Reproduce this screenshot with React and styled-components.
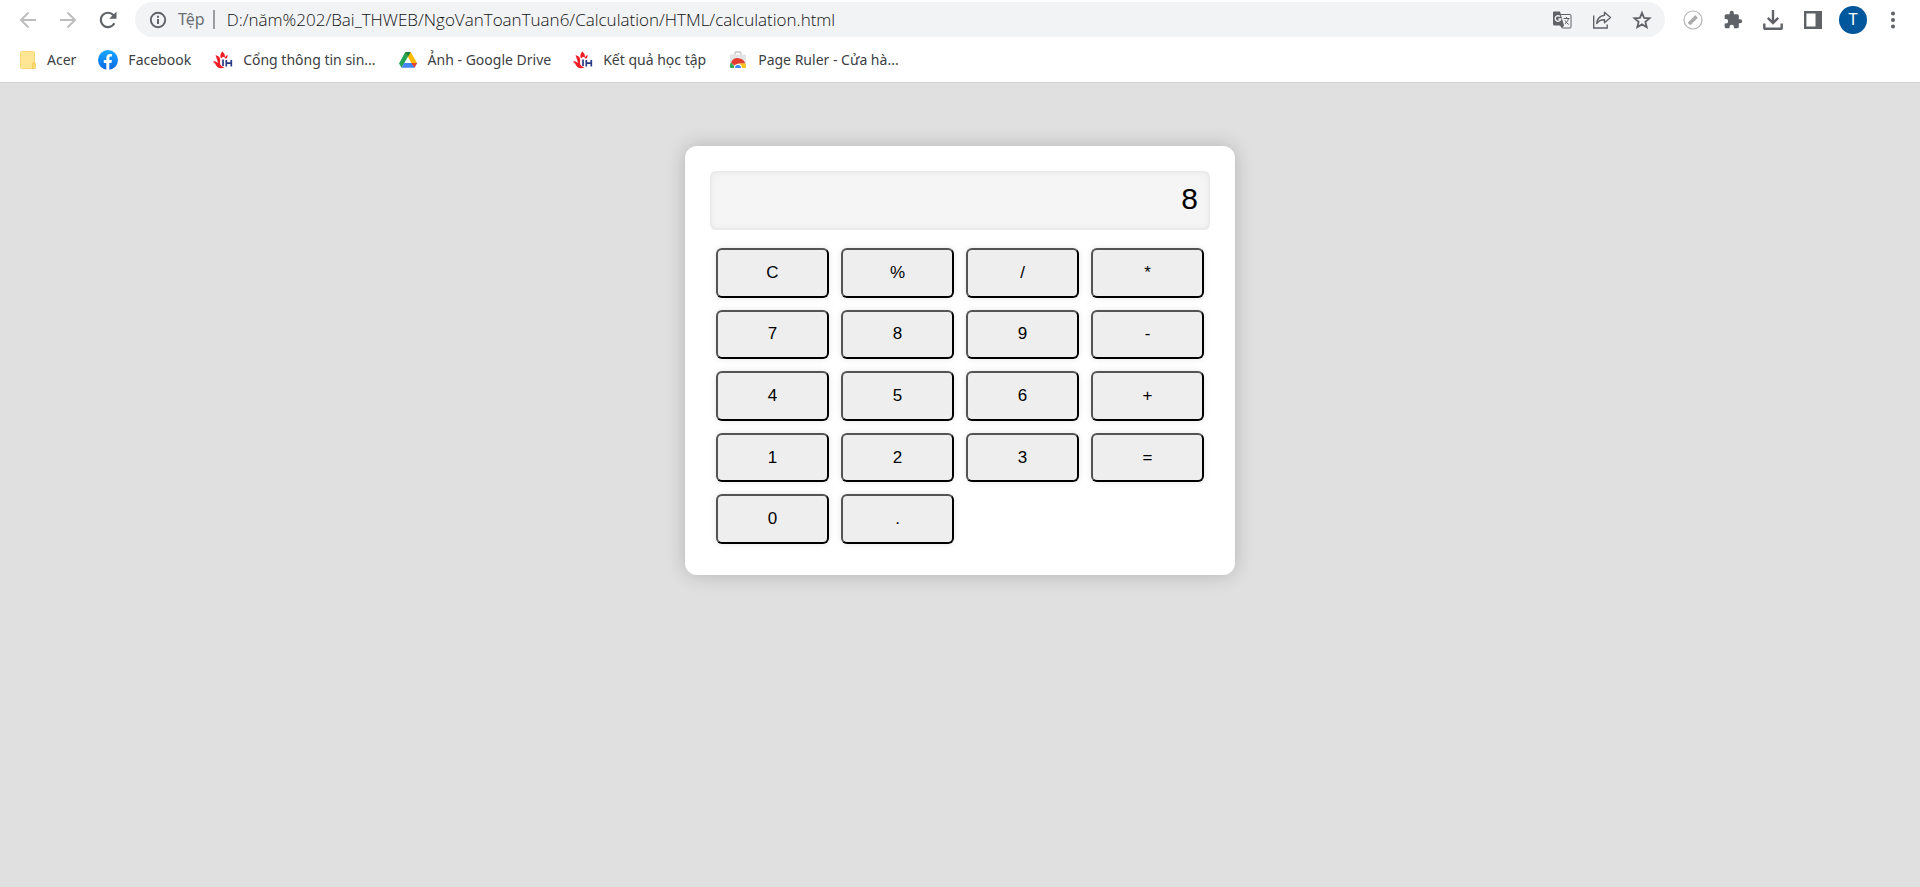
import React, { useState } from 'react';
import styled, { createGlobalStyle } from 'styled-components';

const GlobalStyle = createGlobalStyle`
  *, *::before, *::after { box-sizing: border-box; }
  body {
    margin: 0;
    background: #e0e0e0;
    font-family: "Liberation Sans", Arial, sans-serif;
  }
`;

const Page = styled.div`
  display: flex;
  flex-direction: column;
  min-height: 100vh;
`;

const Browser = styled.header`
  background: #fff;
  border-bottom: 1px solid #d3d3d4;
  padding-top: 2px;
  font-family: "Noto Sans", "Segoe UI", sans-serif;
`;

const Toolbar = styled.div`
  display: flex;
  align-items: center;
  height: 35px;
  padding: 0 7px 0 8px;
`;

const IconButton = styled.button`
  display: flex;
  align-items: center;
  justify-content: center;
  flex: none;
  width: 40px;
  height: 34px;
  padding: 0;
  border: 0;
  background: none;
  color: ${({ $muted }) => ($muted ? '#bcbdbf' : '#5f6368')};

  svg { display: block; }
`;

const Omnibox = styled.form`
  display: flex;
  align-items: center;
  flex: 1;
  min-width: 0;
  height: 35px;
  margin: 0 8px 0 7px;
  padding: 0 3px;
  border-radius: 18px;
  background: #f1f3f4;
`;

const Scheme = styled.label`
  flex: none;
  padding-right: 8px;
  border-right: 2px solid #9b9da0;
  color: #6b6e73;
  font-size: 16px;
  line-height: 19px;
`;

const Address = styled.input`
  flex: 1;
  min-width: 0;
  height: 32px;
  padding: 0 0 0 12px;
  border: 0;
  outline: 0;
  background: none;
  color: #111214;
  font-family: "Open Sans", "Segoe UI", sans-serif;
  font-size: 17px;
  font-weight: 340;
`;

const Avatar = styled.span`
  display: grid;
  place-items: center;
  width: 28px;
  height: 28px;
  border-radius: 50%;
  background: #01579b;
  color: #fff;
  font-family: Roboto, sans-serif;
  font-size: 16px;
`;

const Bookmarks = styled.nav`
  display: flex;
  align-items: center;
  gap: 22px;
  height: 45px;
  padding: 0 17px;
`;

const Bookmark = styled.a`
  display: flex;
  align-items: center;
  flex: none;
  gap: 10px;
  color: #3c4043;
  font-size: 14px;
  line-height: 20px;
  text-decoration: none;
  white-space: nowrap;
`;

const Main = styled.main`
  flex: 1;
  display: flex;
  justify-content: center;
  align-items: flex-start;
  padding: 63px 16px;
`;

const Card = styled.section`
  width: 100%;
  max-width: 550px;
  padding: 25px;
  border-radius: 12px;
  background: #fff;
  box-shadow: 0 0 20px rgba(0, 0, 0, 0.2);
`;

const Display = styled.input`
  display: block;
  width: 100%;
  height: 59px;
  padding: 0 12px 3px;
  border: 0;
  outline: 0;
  border-radius: 6px;
  background: #f5f5f5;
  box-shadow: inset 0 0 6px rgba(0, 0, 0, 0.1);
  color: #000;
  font-family: inherit;
  font-size: 30px;
  text-align: right;
`;

const Keypad = styled.div`
  display: grid;
  grid-template-columns: repeat(4, 1fr);
  grid-auto-rows: 1fr;
  gap: 12px;
  height: 296px;
  margin: 18px 6px 6px;
`;

const Key = styled.button`
  padding: 0;
  border: 2px outset #000;
  border-radius: 6px;
  background: #eee;
  box-shadow: 0 0 6px rgba(0, 0, 0, 0.1);
  color: #000;
  font-family: inherit;
  font-size: 17px;
`;

const BackIcon = () => (
  <svg width="18" height="18" viewBox="0 0 18 18" fill="none" stroke="currentColor" strokeWidth="2">
    <path d="M17 9H2M9.500 1.500L2 9l7.500 7.500" />
  </svg>
);

const ForwardIcon = () => (
  <svg width="18" height="18" viewBox="0 0 18 18" fill="none" stroke="currentColor" strokeWidth="2">
    <path d="M1 9H16M8.500 1.500L16 9l-7.500 7.500" />
  </svg>
);

const ReloadIcon = () => (
  <svg width="18" height="18" viewBox="0 0 18 18" fill="none">
    <path d="M15.400 12.200A7.200 7.200 0 1 1 14.500 4.300" stroke="currentColor" strokeWidth="2.200" />
    <path d="M17.500 .5v7.300h-7.300z" fill="currentColor" />
  </svg>
);

const InfoIcon = () => (
  <svg width="18" height="18" viewBox="0 0 18 18" fill="none" stroke="currentColor">
    <circle cx="9" cy="9" r="7.200" strokeWidth="1.900" />
    <path d="M9 8v5M9 4.800v2" strokeWidth="2" />
  </svg>
);

const TranslateIcon = () => (
  <svg width="20" height="20" viewBox="0 0 20 20">
    <path d="M8.500 4.500H18a1 1 0 0 1 1 1V17a1 1 0 0 1-1 1h-7.500" fill="none" stroke="currentColor" />
    <path d="M2 1.500h6L12 15.500H2.500a1.500 1.500 0 0 1-1.500-1.500V2.500a1 1 0 0 1 1-1zM8 15.500h4L10 18.500z" fill="currentColor" />
    <path d="M8.100 6.600A2.800 2.800 0 1 0 8.800 9H6.300" fill="none" stroke="#f1f3f4" strokeWidth="1.400" />
    <path d="M11.500 8.500h6M14.500 7v1.500M16.500 8.500c-.6 2.500-2 4.200-3.700 5.300M13 10.500c.8 1.600 2.100 3 3.800 4" fill="none" stroke="currentColor" />
  </svg>
);

const ShareIcon = () => (
  <svg width="20" height="20" viewBox="0 0 20 20" fill="none" stroke="currentColor" strokeWidth="1.400">
    <path d="M1.700 5.500V18h13.500v-3.500" />
    <path d="M12.500 2.200l6 5.300-6 5.300V9.700c-3.500 0-6 1-7.800 3.800.3-4.200 2.800-7.600 7.800-8.300z" strokeLinejoin="round" />
  </svg>
);

const StarIcon = () => (
  <svg width="20" height="20" viewBox="0 0 20 20" fill="none" stroke="currentColor" strokeWidth="1.800">
    <path d="M10 2.800l2.100 5 5.500.5-4.200 3.600 1.300 5.300L10 14.400l-4.700 2.800 1.300-5.300L2.400 8.300l5.500-.5z" />
  </svg>
);

const RulerIcon = () => (
  <svg width="20" height="20" viewBox="0 0 20 20" fill="none">
    <circle cx="10" cy="10" r="9" stroke="#b4b4b4" strokeWidth="1.200" />
    <path d="M6 14l7.500-7.500" stroke="#a5a5a5" strokeWidth="3.600" />
    <path d="M7 11.500l1 1M9 9.500l1 1M11 7.500l1 1" stroke="#d8d8d8" strokeWidth=".8" />
  </svg>
);

const PuzzleIcon = () => (
  <svg width="20" height="20" viewBox="0 0 24 24" fill="currentColor">
    <path d="M20.500 11H19V7a2 2 0 0 0-2-2h-4V3.500a2.500 2.500 0 0 0-5 0V5H4a2 2 0 0 0-2 2v3.800h1.500a2.700 2.700 0 0 1 0 5.400H2V20a2 2 0 0 0 2 2h3.800v-1.500a2.700 2.700 0 0 1 5.400 0V22H17a2 2 0 0 0 2-2v-4h1.500a2.500 2.500 0 0 0 0-5z" />
  </svg>
);

const DownloadIcon = () => (
  <svg width="20" height="20" viewBox="0 0 20 20" fill="none" stroke="currentColor" strokeWidth="2.400">
    <path d="M10 0v12.500M4.800 7.800L10 13l5.200-5.200M1.300 13.500V18a.8.8 0 0 0 .8.800h15.800a.8.800 0 0 0 .8-.8v-4.500" />
  </svg>
);

const PanelIcon = () => (
  <svg width="18" height="18" viewBox="0 0 18 18">
    <path d="M1.200 1.200h15.600v15.600H1.200z" fill="none" stroke="currentColor" strokeWidth="2.400" />
    <path d="M11.500 0H18v18h-6.500z" fill="currentColor" />
  </svg>
);

const MenuIcon = () => (
  <svg width="18" height="18" viewBox="0 0 18 18" fill="currentColor">
    <circle cx="9" cy="2.500" r="2" />
    <circle cx="9" cy="9" r="2" />
    <circle cx="9" cy="15.500" r="2" />
  </svg>
);

const FolderIcon = () => (
  <svg width="20" height="20" viewBox="0 0 20 20">
    <path d="M4.500 1.500h12a1 1 0 0 1 1 1v16h-13a1 1 0 0 1-1-1v-15a1 1 0 0 1 1-1z" fill="#ffe694" stroke="#f8d775" />
    <path d="M15.500 14a1.500 1.500 0 0 1 3 0v3.500a1 1 0 0 1-1 1h-2z" fill="#ffdc70" stroke="#f0c95c" strokeWidth=".8" />
  </svg>
);

const FacebookIcon = () => (
  <svg width="20" height="20" viewBox="0 0 20 20">
    <defs>
      <linearGradient id="facebookBlue" x2="0" y2="1">
        <stop stopColor="#1aa9ff" />
        <stop offset="1" stopColor="#0867e3" />
      </linearGradient>
    </defs>
    <circle cx="10" cy="10" r="10" fill="url(#facebookBlue)" />
    <path d="M8.300 19.900V13H5.800v-3h2.500V8c0-2.700 1.500-4.100 3.800-4.100.9 0 1.900.2 1.900.2v2.500h-1.200c-1.100 0-1.500.7-1.500 1.500V10h2.600l-.5 3h-2.100v6.900a10 10 0 0 1-3 0z" fill="#fff" />
  </svg>
);

const UniversityIcon = () => (
  <svg width="20" height="20" viewBox="0 0 20 20">
    <path d="M9.300 1.500c2 1.800 3 3.600 2.600 6L10 6.800 8 8.500C6.600 6.200 7.500 3.500 9.300 1.500zM2.500 5.300c2.700.3 4.300 1.700 4.700 4.200l-.2 4c.5 2.300 2 3.300 4.500 3.800-3 1.700-6.300 1.100-8-1.300-.9-1.400-1.500-2.900-3.500-4.200 1.800-1 3.500-.4 4.700 1.500C4.900 10.500 3.500 8.500 2.500 5.300zM14.500 5c.2 1.300-.2 2.400-1 3.400h-1.700c.2-1.500 1.100-2.700 2.700-3.400z" fill="#ec2027" />
    <path d="M10 9.500v6.500M13.300 10v6.500M18.300 10v6.500M13.300 13.200h5" fill="none" stroke="#2b3a82" strokeWidth="1.700" />
  </svg>
);

const DriveIcon = () => (
  <svg width="20" height="20" viewBox="0 0 20 20">
    <path d="M7.300 2h5.400L6.300 13 3.500 17.800 1 13.500z" fill="#23a455" />
    <path d="M7.300 2h5.400L19 13h-5.600z" fill="#ffba00" />
    <path d="M7.300 2h5.400L10 6.700z" fill="#188038" />
    <path d="M6.300 13H19l-2.500 4.800h-13z" fill="#4285f4" />
    <path d="M13.400 13H19l-2.500 4.800z" fill="#ea4335" />
  </svg>
);

const StoreIcon = () => (
  <svg width="20" height="20" viewBox="0 0 20 20">
    <path d="M7 5V3a1 1 0 0 1 1-1h4a1 1 0 0 1 1 1v2" fill="none" stroke="#c4c6c8" strokeWidth="1.300" />
    <path d="M2 4.500h16V17a1 1 0 0 1-1 1H3a1 1 0 0 1-1-1z" fill="#e3e4e6" />
    <path d="M3 12.500a7.700 7.700 0 0 1 14.300 1H10L7 16z" fill="#e33b2e" />
    <path d="M3 12.300L7.500 18H3a1 1 0 0 1-1-1c0-2 .2-3.200 1-4.700z" fill="#34a853" />
    <path d="M11 13.500h6.300c.5 1.200.7 2.300.7 3.500a1 1 0 0 1-1 1h-5z" fill="#fbc116" />
    <path d="M6 18a4 4 0 0 1 8 0z" fill="#fff" />
    <path d="M7 18a3 3 0 0 1 6 0z" fill="#4285f4" />
  </svg>
);

const bookmarks = [
  { label: 'Acer', Icon: FolderIcon },
  { label: 'Facebook', Icon: FacebookIcon },
  { label: 'Cổng thông tin sin...', Icon: UniversityIcon },
  { label: 'Ảnh - Google Drive', Icon: DriveIcon },
  { label: 'Kết quả học tập', Icon: UniversityIcon },
  { label: 'Page Ruler - Cửa hà...', Icon: StoreIcon },
];

const keys = ['C', '%', '/', '*', '7', '8', '9', '-', '4', '5', '6', '+', '1', '2', '3', '=', '0', '.'];

const calculate = (expression) => {
  const tokens = expression.match(/\d*\.?\d+|[-+*/%]/g) || [];
  const apply = {
    '+': (a, b) => a + b,
    '-': (a, b) => a - b,
    '*': (a, b) => a * b,
    '/': (a, b) => a / b,
    '%': (a, b) => a % b,
  };
  const values = [Number(tokens[0] || 0)];
  const pending = [];
  for (let i = 1; i + 1 < tokens.length; i += 2) {
    const operator = tokens[i];
    const next = Number(tokens[i + 1]);
    if (operator === '+' || operator === '-') {
      values.push(next);
      pending.push(operator);
    } else {
      values.push(apply[operator](values.pop(), next));
    }
  }
  return String(pending.reduce((sum, operator, i) => apply[operator](sum, values[i + 1]), values[0]));
};

export default function App() {
  const [value, setValue] = useState('8');
  const [url, setUrl] = useState('D:/năm%202/Bai_THWEB/NgoVanToanTuan6/Calculation/HTML/calculation.html');

  const press = (key) => {
    if (key === 'C') setValue('');
    else if (key === '=') setValue(calculate(value));
    else setValue(value + key);
  };

  return (
    <Page>
      <GlobalStyle />
      <Browser>
        <Toolbar>
          <IconButton $muted aria-label="Back"><BackIcon /></IconButton>
          <IconButton $muted aria-label="Forward"><ForwardIcon /></IconButton>
          <IconButton aria-label="Reload"><ReloadIcon /></IconButton>
          <Omnibox onSubmit={(event) => event.preventDefault()}>
            <IconButton type="button" aria-label="Site information"><InfoIcon /></IconButton>
            <Scheme htmlFor="address">Tệp</Scheme>
            <Address id="address" value={url} onChange={(event) => setUrl(event.target.value)} />
            <IconButton type="button" aria-label="Translate"><TranslateIcon /></IconButton>
            <IconButton type="button" aria-label="Share"><ShareIcon /></IconButton>
            <IconButton type="button" aria-label="Bookmark"><StarIcon /></IconButton>
          </Omnibox>
          <IconButton aria-label="Page Ruler"><RulerIcon /></IconButton>
          <IconButton aria-label="Extensions"><PuzzleIcon /></IconButton>
          <IconButton aria-label="Downloads"><DownloadIcon /></IconButton>
          <IconButton aria-label="Side panel"><PanelIcon /></IconButton>
          <IconButton aria-label="Profile"><Avatar>T</Avatar></IconButton>
          <IconButton aria-label="Menu"><MenuIcon /></IconButton>
        </Toolbar>
        <Bookmarks>
          {bookmarks.map(({ label, Icon }) => (
            <Bookmark key={label} href="#"><Icon />{label}</Bookmark>
          ))}
        </Bookmarks>
      </Browser>
      <Main>
        <Card>
          <Display aria-label="Result" readOnly value={value} />
          <Keypad>
            {keys.map((key) => (
              <Key key={key} type="button" onClick={() => press(key)}>{key}</Key>
            ))}
          </Keypad>
        </Card>
      </Main>
    </Page>
  );
}
